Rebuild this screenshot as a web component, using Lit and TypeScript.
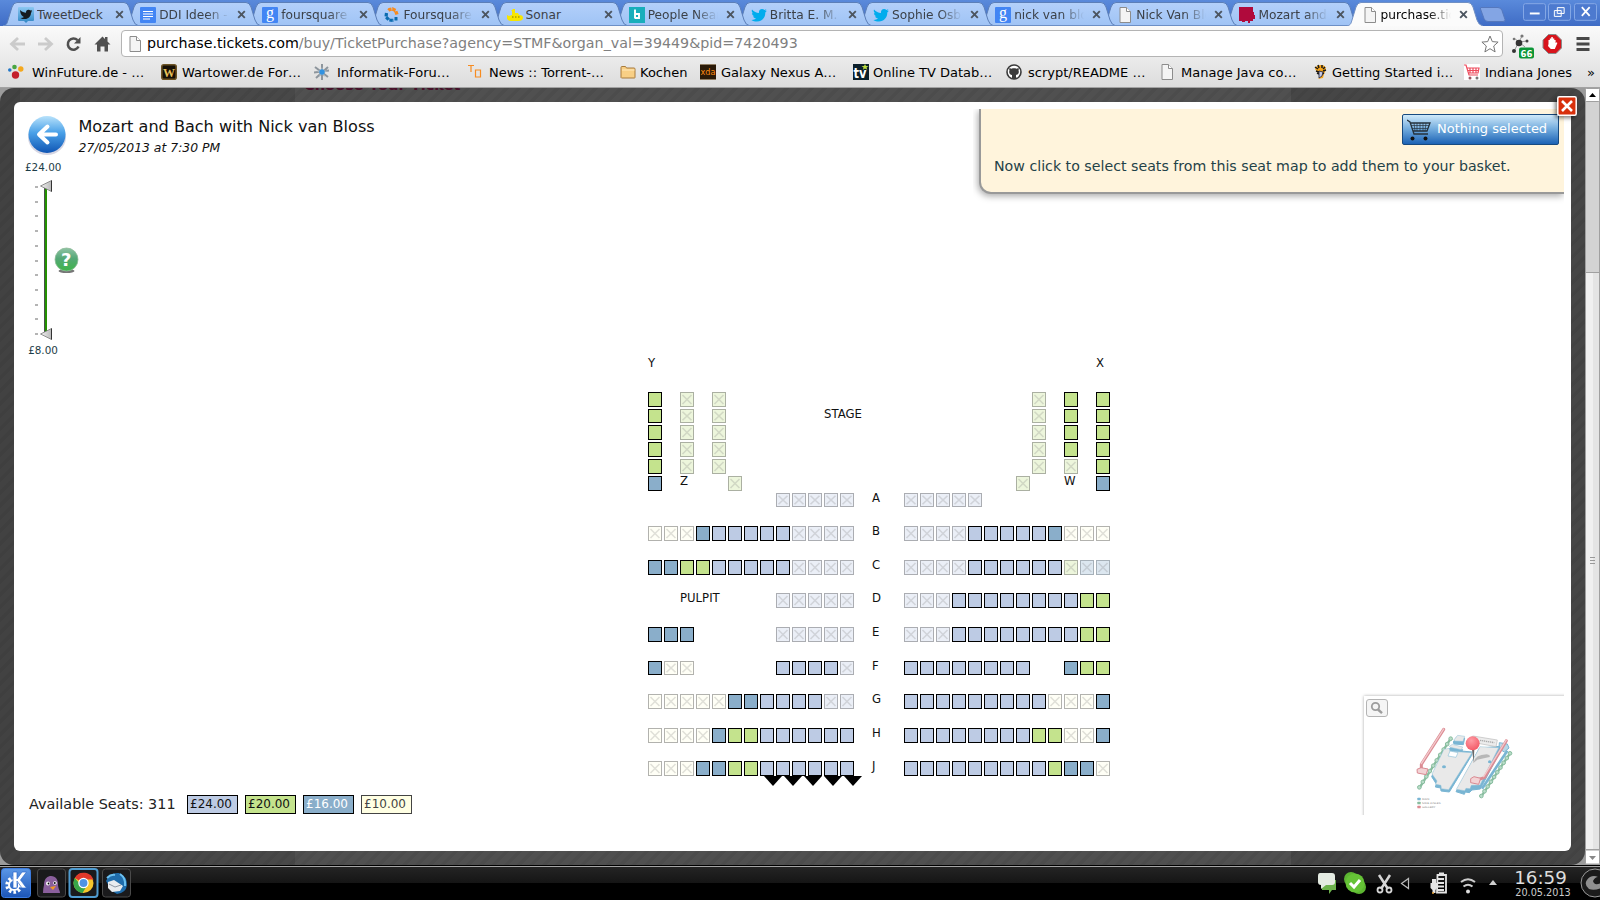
import { LitElement, html, css, svg, nothing } from "lit";
import { customElement, property } from "lit/decorators.js";
import { classMap } from "lit/directives/class-map.js";
import { styleMap } from "lit/directives/style-map.js";

const page = svg`<path d="M3 .5h6.5l4 4v11H3z" fill="#f4f4f4" stroke="#8c8c8c"/><path d="M9.5.5v4h4" fill="#fff" stroke="#8c8c8c"/>`;
const google = svg`<rect width="16" height="16" rx="1" fill="#4285f4"/><text x="8" y="11" text-anchor="middle" font-family="Liberation Serif,serif" font-size="16" fill="#fff">g</text>`;
const bird = svg`<path d="M1 2.500c2 2.300 4.300 3.300 7 3.400C7.600 3.500 9.300 2 11 2c1 0 1.800.4 2.400 1l2-.8-1.200 1.900 1.700-.3-1.600 1.800C14.500 10.600 10.800 14.500 6 14.500c-2.200 0-4-.5-5.600-1.600 1.800.1 3.400-.3 4.700-1.300-1.500-.1-2.600-1-3-2.300h1.400C1.900 8.800.9 7.500.9 6l1.400.4C.8 5.300.4 4 1 2.500z" fill="#00aced"/>`;

const icons: Record<string, unknown> = {
  page,
  google,
  bird,
  deck: svg`<defs><linearGradient id="dk" x2="0" y2="1"><stop stop-color="#8cc8f2"/><stop offset="1" stop-color="#2f86c4"/></linearGradient></defs><path d="M1 0h14q1 0 1 1v12q0 1-1 1h-5l-2 2-2-2H1q-1 0-1-1V1q0-1 1-1z" fill="url(#dk)"/><path d="M2 3c2 2 4 2.600 6 2.700C7.800 3.900 9 2.800 10.500 2.800c.8 0 1.400.3 2 .8l1.600-.5-1 1.400 1.200-.1-1.300 1.400c.1 3.600-2.800 6.300-6 6.300-1.900 0-3.300-.4-4.600-1.200 1.500.1 2.600-.2 3.600-1C4.500 9.500 2.500 8 2 3z" fill="#141a20"/>`,
  docs: svg`<rect width="16" height="16" rx="1" fill="#4285f4"/><path d="M3 4.500h10M3 7h10M3 9.500h10M3 12h7" stroke="#fff" stroke-width="1.200"/>`,
  ring: svg`<path d="M4.500 3.500l1-1 3-.5 3 1.500 1.500 4" fill="none" stroke="#f78b1f" stroke-width="3.400" stroke-dasharray="3.500 .8"/><path d="M2.500 6l-.5 4 3 3 5 .5" fill="none" stroke="#0b6cb0" stroke-width="3.200" stroke-dasharray="3.500 .8"/><path d="M12 10v3.500" stroke="#0b6cb0" stroke-width="3"/>`,
  sub: svg`<path d="M6 2h2v4h3l1 2c3 0 4 1 4 3s-2 3-5 3H5c-3 0-5-1-5-3V8l2 1 3-1V4H4z" fill="#f7e600"/><path d="M5 10h1.500M8 10h1.500M11 10h1.500" stroke="#b09b00" stroke-width="1.400"/>`,
  people: svg`<rect width="16" height="16" fill="#18aebb"/><path d="M6 2.500v9M6 7h4v4H6" fill="none" stroke="#fff" stroke-width="1.900"/>`,
  splat: svg`<path d="M0 0h14v5h1v3h1v4h-2v2h-3v2H9v-2H6v1H3v-1H0z" fill="#b00a3c"/>`,
  win: svg`<circle cx="6.500" cy="3" r="2.300" fill="#49a642"/><circle cx="12.800" cy="5" r="2.700" fill="#f4a81d"/><circle cx="1.800" cy="6" r="1.800" fill="#2277c8"/><circle cx="7.500" cy="11" r="3.700" fill="#c4202c"/>`,
  war: svg`<rect x=".8" y=".8" width="14.400" height="14.400" rx="2" fill="#161006" stroke="#6d5425" stroke-width="1.600"/><text x="8" y="12.500" text-anchor="middle" font-family="Liberation Serif,serif" font-weight="bold" font-size="12" fill="#e6c15a">W</text>`,
  star: svg`<path d="M8 0v16M1 3l13 10M14 3L2 14M0 8.500l15-2" stroke="#8d959c" stroke-width="2"/><path d="M8 3l1.500 3 4 1-3.500 2 .5 4L8 10.500 5 13l1-4-3.500-2L6.500 6z" fill="#a9b6c0"/><circle cx="8" cy="8" r="2.700" fill="#3292e0"/>`,
  torrent: svg`<path d="M1 1.500h6M4 1.500V8M8.500 6h5v7h-5z" fill="none" stroke="#f78b1f" stroke-width="1.200"/>`,
  folder: svg`<path d="M1 13.500V3.500q0-1 1-1h3.500l1 1.500H14q1 0 1 1v8.500q0 .5-.5.5h-13z" fill="#f8cf85" stroke="#a87b3c"/><path d="M2 6h12.500" stroke="#ffe9bb"/>`,
  xda: svg`<rect width="16" height="16" fill="#2a1a08"/><path d="M0 .5h16M0 15.500h16" stroke="#8f7d64"/><text x="8" y="11" text-anchor="middle" textLength="15" lengthAdjust="spacingAndGlyphs" font-family="DejaVu Sans,sans-serif" font-size="9" fill="#ff8a12">xda</text>`,
  tv: svg`<rect width="16" height="16" fill="#0b1f2b"/><text x="7" y="14" text-anchor="middle" textLength="13" lengthAdjust="spacingAndGlyphs" font-family="DejaVu Sans,sans-serif" font-weight="bold" font-size="14" fill="#fff">tv</text><path d="M12 0l1 2h2.500l-2 1.500.8 2.300L12 4.500 9.800 5.800l.8-2.300L8.500 2H11z" fill="#b9dc3f"/>`,
  github: svg`<circle cx="8" cy="8" r="7" fill="#fff" stroke="#3a3a3a" stroke-width="1.600"/><path d="M3.500 4l2 .7c1.500-.5 3.500-.5 5 0l2-.7c.4 1 .3 1.800 0 2.500C13.500 9 12 10.800 10 11v4H6v-4C4 10.800 2.500 9 3.500 6.500 3.200 5.800 3.100 5 3.500 4z" fill="#3a3a3a"/>`,
  tiger: svg`<path d="M3 5q1-4 6-4t5 5l-2 4-1 4-5 1 3-3-3-3z" fill="#f5a51c"/><path d="M3 3l3 2M6 1l1 3M10 1v3M13 3l-2 2M14 6l-3 1M4 7l3 1M5 9l2 1M12 9l-2 1" stroke="#181818" stroke-width="1.500"/><path d="M7 7l4 1-1 4-3 2z" fill="#c4c9e6" stroke="#1c1c30" stroke-width=".8"/>`,
  trolley: svg`<rect width="16" height="16" fill="#fff"/><path d="M0 1h2l3 10h9M3 4h12l-1 5H4.500M6 4v5M9 4v5M12 4v5M3.500 6.500h11" fill="none" stroke="#ee4a5c" stroke-width="1.200"/><circle cx="6" cy="14" r="1.500" fill="#9a5560"/><circle cx="13" cy="14" r="1.500" fill="#777"/>`,
};

const icon = (name: string) => html`<svg class="ico" width="16" height="16" viewBox="0 0 16 16">${icons[name]}</svg>`;

const tabs: [string, string][] = [
  ["deck", "TweetDeck"], ["docs", "DDI Ideen -"], ["google", "foursquare"], ["ring", "Foursquare"],
  ["sub", "Sonar"], ["people", "People Near"], ["bird", "Britta E. M."], ["bird", "Sophie Osb"],
  ["google", "nick van blo"], ["page", "Nick Van Blo"], ["splat", "Mozart and"], ["page", "purchase.tic"],
];

const bookmarks: [string, string, number, number][] = [
  ["win", "WinFuture.de - …", 153, 8], ["war", "Wartower.de For…", 153, 5], ["star", "Informatik-Foru…", 153, 7],
  ["torrent", "News :: Torrent-…", 153, 6], ["folder", "Kochen", 80, 4], ["xda", "Galaxy Nexus A…", 153, 5],
  ["tv", "Online TV Datab…", 153, 4], ["github", "scrypt/README …", 153, 6], ["page", "Manage Java co…", 153, 6],
  ["tiger", "Getting Started i…", 152, 4], ["trolley", "Indiana Jones", 123, 5],
];

@customElement("browser-chrome")
export class BrowserChrome extends LitElement {
  static styles = css`
    :host { display: block; height: 88px; font-family: "DejaVu Sans", sans-serif; color: #000; }
    svg { display: block; flex: none; }
    .strip { height: 26px; background: linear-gradient(#5a8adb, #3f6cc5); display: flex; padding-left: 3px; box-sizing: border-box; }
    .tab { position: relative; width: 122.15px; flex: none; display: flex; align-items: center; padding: 3px 0 0 15px; box-sizing: border-box; font-size: 12.2px; color: #3c4148; }
    .shape { position: absolute; left: 0; top: 2px; }
    .tab .ico, .title, .x { position: relative; }
    .title { width: 70px; margin-left: 3px; white-space: nowrap; overflow: hidden; line-height: 20px; -webkit-mask-image: linear-gradient(90deg, #000 68%, transparent); mask-image: linear-gradient(90deg, #000 68%, transparent); }
    .x { margin-left: 8px; }
    .first .title { -webkit-mask-image: none; mask-image: none; }
    .active { color: #000; }
    .plus { margin: 7px 0 0 10px; position: relative; }
    .wins { margin-left: auto; display: flex; gap: 2px; padding: 2.500px 3px 0 0; }
    .bars { height: 62px; background: linear-gradient(#fafafa, #ececec 30px, #dcdcdc); border-bottom: 1px solid #a2a2a2; box-sizing: border-box; }
    .nav { display: flex; align-items: center; height: 35px; box-sizing: border-box; }
    .url { box-sizing: border-box; width: 1382px; height: 27px; border: 1px solid #b4b4b4; border-radius: 4px; background: #fff; display: flex; align-items: center; padding: 0 3px 0 5px; font-size: 14.25px; color: #808080; white-space: pre; }
    .url b { font-weight: normal; color: #000; }
    .url span { flex: 1; margin: -2px 0 0 4px; }
    .ext { margin-left: 8px; }
    .marks { display: flex; align-items: center; height: 22px; padding-left: 8px; font-size: 13px; white-space: nowrap; }
    .mark { display: flex; align-items: center; flex: none; }
  `;

  render() {
    return html`
      <div class="strip">
        ${tabs.map(([ic, label], i) => {
          const active = i === tabs.length - 1;
          return html`<div class=${classMap({ tab: true, active, first: i === 0 || i === 4 })} style=${styleMap({ zIndex: String(active ? 30 : 20 - i) })}>
            <svg class="shape" width="138" height="24" viewBox="0 0 138 24">
              <defs><linearGradient id="tg" x2="0" y2="1"><stop stop-color="#b3d0fa"/><stop offset="1" stop-color="#9fc3f5"/></linearGradient></defs>
              <path d="M0 24C4 23 4 21 5 18L9 5Q10.500.5 14 .5H121Q124.500.5 126 5L130 18Q131.500 23 136 24" fill=${active ? "#fbfbfb" : "url(#tg)"} stroke=${active ? "#6f8fc4" : "#5c7fb8"}/>
              ${active ? nothing : svg`<path d="M0 23.500H136" stroke="#6c8fc6"/>`}
            </svg>
            ${icon(ic)}<span class="title">${label}</span>
            <svg class="x" width="9" height="9" viewBox="0 0 9 9"><path d="M1.200 1.200l6.600 6.600M7.800 1.200L1.200 7.800" stroke="#4c5560" stroke-width="1.900"/></svg>
          </div>`;
        })}
        <svg class="plus" width="28" height="15" viewBox="0 0 28 15"><path d="M2 .5h17q3 0 4 3l3 9q.5 2-2 2H9q-3 0-4-3L1.500 2Q1 .5 2 .5z" fill="#83a5e4" stroke="#5578bd"/></svg>
        <div class="wins">
          ${[svg`<path d="M7 10.500h10" stroke="#fff" stroke-width="2"/>`,
             svg`<path d="M9.500 4.500h7v6h-7zM6.500 7.500h7v6h-7z" fill="#5b86d6" stroke="#fff"/>`,
             svg`<path d="M8 4l8 9M16 4l-8 9" stroke="#fff" stroke-width="1.800"/>`].map(
            (g) => html`<svg width="23.500" height="18" viewBox="0 0 24 18"><rect x=".5" y=".5" width="22.500" height="17" rx="2" fill="#4d7acf" stroke="#86a9e6"/>${g}</svg>`)}
        </div>
      </div>
      <div class="bars">
        <div class="nav">
          <svg width="121" height="30" viewBox="0 0 121 30">
            <path d="M25 15H12M18 9l-6.500 6 6.500 6" fill="none" stroke="#cbcbcb" stroke-width="2.800"/>
            <path d="M38 15h13M45 9l6.500 6-6.500 6" fill="none" stroke="#cbcbcb" stroke-width="2.800"/>
            <path d="M77.500 11.200A5.600 5.600 0 1 0 78.500 17.500" fill="none" stroke="#505050" stroke-width="2.600"/><path d="M80.500 8v6.500h-6.500z" fill="#505050"/>
            <path d="M94.500 15.500l8-8 2.500 2.500V8h2.500v4.500l3 3h-2.500v7h-3.500v-5h-4v5H97v-7z" fill="#505050"/>
          </svg>
          <div class="url">
            ${icon("page")}<span><b>purchase.tickets.com</b>/buy/TicketPurchase?agency=STMF&amp;organ_val=39449&amp;pid=7420493</span>
            <svg width="18" height="18" viewBox="0 0 18 18"><path d="M9 1l2.300 5.600 5.800.5-4.400 3.900 1.400 5.900L9 13.700 3.900 16.900 5.300 11 .9 7.100l5.800-.5z" fill="#fff" stroke="#777"/></svg>
          </div>
          <svg class="ext" width="86" height="30" viewBox="0 0 86 30">
            <path d="M8 13L3 22M8 13L3 9M8 13l3-6M8 13l8-1M8 13l6 5" stroke="#999" stroke-width="1"/>
            <circle cx="8" cy="14" r="3.300" fill="#333"/><circle cx="3" cy="22" r="2" fill="#333"/><circle cx="3" cy="10" r="1.300" fill="#777"/><circle cx="11" cy="7" r="1.600" fill="#777"/><circle cx="16" cy="12" r="1.500" fill="#444"/>
            <rect x="8" y="18.500" width="15" height="11" rx="2" fill="#0c9637"/><text x="15.500" y="27.500" text-anchor="middle" font-family="DejaVu Sans,sans-serif" font-weight="bold" font-size="8.500" fill="#fff">66</text>
            <path d="M37.500 5.500h7.500l5.500 5.500v8l-5.500 5.500h-7.500L32 19v-8z" fill="#d8141c" stroke="#8a8a8a"/><path d="M37.500 15V11h1.300V9.500h1.500V8h1.500v1.500h1.500V11h1.300v3l1-.8.8.8-2.600 6h-4L37 17z" fill="#fff"/>
            <path d="M65.500 9.500h13M65.500 15h13M65.500 20.500h13" stroke="#484848" stroke-width="3"/>
          </svg>
        </div>
        <div class="marks">
          ${bookmarks.map(([ic, label, w, gap]) => html`<div class="mark" style=${styleMap({ width: `${w}px`, gap: `${gap}px` })}>${icon(ic)}<span>${label}</span></div>`)}
          <span>»</span>
        </div>
      </div>`;
  }
}

/* Lower case: free seat, upper case: taken. l £24, g £20, b £16, y £10 */
const side = "g.G.G...................G.g.g";
const seatRows: string[] = [
  side, side, side, side,
  "g.G.G...................G.G.g",
  "b....G.................G....b",
  "........LLLLL...LLLLL........",
  "",
  "YYYblllllLLLL...LLLLlllllbYYY",
  "",
  "bbgglllllLLLL...LLLLllllllGBB",
  "",
  "........LLLLL...LLLllllllllgg",
  "",
  "bbb.....LLLLL...LLLllllllllgg",
  "",
  "bYY.....llllL...llllllll..bgg",
  "",
  "YYYYYbbllllLL...lllllllllYYYb",
  "",
  "YYYYbggllllll...llllllllggYYb",
  "",
  "YYYbbggllllll...lllllllllgbbY",
];
const rowTracks = [17, 16, 17, 17, 17, 17, 17, 16, 17, 17, 17, 16, 17, 17, 17, 17, 17, 16, 17, 17, 17, 16, 17];
const shortRows = [1, 6, 16];
/* text, column, row (row 0 is the heading track) */
const mapLabels: [string, number, number][] = [
  ["Y", 0, 0], ["X", 28, 0], ["STAGE", 11, 2], ["Z", 2, 6], ["W", 26, 6], ["PULPIT", 2, 13],
  ["A", 13, 7], ["B", 13, 9], ["C", 13, 11], ["D", 13, 13], ["E", 13, 15], ["F", 13, 17], ["G", 13, 19], ["H", 13, 21], ["J", 13, 23],
];

@customElement("seat-map")
export class SeatMap extends LitElement {
  static styles = css`
    :host { display: block; width: 464px; font: 11.7px "DejaVu Sans", sans-serif; color: #111; }
    .grid { display: grid; grid-template-columns: repeat(29, 16px); }
    .seat { width: 14px; height: 15px; box-sizing: border-box; border: 1px solid #000; }
    .short { height: 14px; }
    .l { background: #bdcbe4; } .g { background: #c4e38d; } .b { background: #8aaeca; } .y { background: #ffffe3; }
    .taken svg { display: block; width: 12px; height: 100%; }
    .taken.l { background: #ebeff7; border-color: #abadb2; } .taken.g { background: #edf6dc; border-color: #abb0a2; } .taken.b { background: #dce7f0; border-color: #a6b0b8; } .taken.y { background: #fffff6; border-color: #b2b2ae; }
    .label { white-space: nowrap; line-height: 13px; height: 13px; margin-top: -1px; width: 0; }
    .row-label { padding-left: 16px; }
    .arrows { display: flex; gap: 2px; padding-left: 116px; margin-top: -2px; position: relative; }
  `;

  render() {
    const seats = seatRows.flatMap((row, r) => [...row].map((c, i) => {
      if (c === ".") return nothing;
      const kind = c.toLowerCase();
      const taken = c !== kind;
      return html`<div class=${classMap({ seat: true, taken, [kind]: true, short: shortRows.includes(r) })} style=${styleMap({ gridArea: `${r + 2} / ${i + 1}` })}>
        ${taken ? html`<svg viewBox="0 0 12 13" preserveAspectRatio="none"><path d="M1.500 2l9 9M10.500 2l-9 9" stroke="#707070" stroke-opacity=".22" stroke-width="1.600"/></svg>` : nothing}</div>`;
    }));
    return html`
      <div class="grid" style=${styleMap({ gridTemplateRows: `34px ${rowTracks.map((t) => `${t}px`).join(" ")}` })}>
        ${seats}
        ${mapLabels.map(([t, c, r]) => html`<div class=${classMap({ label: true, "row-label": c === 13 })} style=${styleMap({ gridArea: `${r + 1} / ${c + 1}` })}>${t}</div>`)}
      </div>
      <div class="arrows">${[0, 1, 2, 3, 4].map(() => html`<svg width="18" height="10" viewBox="0 0 18 10"><path d="M0 0h18L9 10z"/></svg>`)}</div>`;
  }
}

@customElement("mini-map")
export class MiniMap extends LitElement {
  static styles = css`
    :host { display: block; box-sizing: border-box; width: 203px; height: 122px; padding: 3px 0 0 3px; overflow: hidden; }
    .box { width: 210px; height: 130px; box-shadow: 0 0 3px #a8a8a8; background: #fff; }
    .zoom { display: block; padding: 3px 0 0 2px; }
    .plan { display: block; margin: -7px 0 0 36px; }
  `;

  render() {
    const beads = (x1: number, y1: number, x2: number, y2: number) =>
      Array.from({ length: 10 }, (_, i) => svg`<circle cx=${x1 + ((x2 - x1) * i) / 9} cy=${y1 + ((y2 - y1) * i) / 9} r="5.500" fill="#b9dcc8" stroke="#88bd9f" stroke-width="3"/>`);
    return html`<div class="box">
      <svg class="zoom" width="22" height="18" viewBox="0 0 22 18"><rect x=".5" y=".5" width="21" height="17" rx="2.500" fill="#f5f5f5" stroke="#b4b4b4"/><circle cx="9.500" cy="7.500" r="3.700" fill="none" stroke="#9d9d9d" stroke-width="1.800"/><path d="M12 10.500l4 3.700" stroke="#9d9d9d" stroke-width="2.400"/></svg>
      <svg class="plan" width="130" height="110" viewBox="0 0 390 330">
        <g stroke-linejoin="round">
          <path d="M58 234L152 86M244 259L330 130" stroke="#88bd9f" stroke-width="7"/>
          ${beads(58, 232, 152, 86)}${beads(244, 258, 330, 130)}
          <path d="M246 236L322 122" stroke="#79b5d3" stroke-width="8"/>
          <path d="M298 98l24 4 5 12-14 12-16-10z" fill="#b9d7e5" stroke="#79b5d3" stroke-width="3"/>
          <g stroke="#79b5d3" stroke-width="3" fill="#79b5d3">
            <path d="M95 200L131 123l20-3 65 6-1 10-67 110-25-3-1-9-16-3 3-9z"/><path d="M168 245l70-130 60-6 3 14-60 114-25 3-8 8-12-2-3 7z"/>
            <path d="M160 96l10-15 24 3-4 20-28-2zM146 118l8-7 34 8-4 8-36-7z"/>
          </g>
          <g stroke="#93c2d9" stroke-width="1.500" fill="#e9e9e9">
            <path d="M96 192L132 118l16-3 2 9 66 4-70 111-22-3-1-10-16-3 4-10z"/><path d="M169 238l71-128 56 3-56 112-26 1-4 10-12-1-4 7z"/>
            <path d="M162 89l11-13 21 3-5 15-25-1zM148 109l9-6 31 8-4 8-34-7z"/>
          </g>
          <path d="M150 123l24 5-6 14-24-4z" fill="#fff" stroke="#93c2d9" stroke-width="2"/><ellipse cx="132" cy="170" rx="6" ry="4.500" fill="#79b5d3"/><ellipse cx="269" cy="155" rx="5" ry="4.500" fill="#79b5d3"/>
          <path d="M209 84l10-6 73 12-4 20-70-13z" fill="#ececec" stroke="#b9b9b9" stroke-width="2"/><path d="M240 91l43 7" stroke="#aaa" stroke-width="4" stroke-dasharray="4 2"/>
          <g fill="none" stroke-linecap="round"><path d="M131 58L64 163v18M319 92L253 203l-26 8" stroke="#dc8c94" stroke-width="9"/><path d="M131 57L64 161M319 90L251 200" stroke="#f3c9cc" stroke-width="4"/></g>
          <path d="M51 178l12-5 21 4-6 17-26-5zM212 206l10-6 20 5-6 18-24-5z" fill="#f3d3d5" stroke="#d98991" stroke-width="3"/>
          <path d="M220 159q5-25 40-26 12 2 9 8-16 4-37 8z" fill="#9c9c9c" opacity=".65"/>
          <path d="M216 118h7l-2 41z" fill="#686868"/>
        </g>
        <defs><radialGradient id="pin" cx=".4" cy=".3" r=".7"><stop stop-color="#ff9ca4"/><stop offset="1" stop-color="#f35c69"/></radialGradient></defs>
        <circle cx="218" cy="100" r="21" fill="url(#pin)"/>
        ${[["#79b5d3", "MAIN", 268, 22], ["#88bd9f", "SIDE AISLES", 280, 56], ["#dc8c94", "GALLERY", 292, 40]].map(
          ([c, t, y, w]) => svg`<rect x="52" y=${Number(y) - 5} width="10" height="8" rx="2" fill=${c}/><text x="66" y=${Number(y) + 3} font-family="DejaVu Sans,sans-serif" font-size="7.500" textLength=${w} lengthAdjust="spacingAndGlyphs" fill="#8a8a8a">${t}</text>`)}
      </svg></div>`;
  }
}

@customElement("price-slider")
export class PriceSlider extends LitElement {
  static styles = css`
    :host { display: block; width: 66px; font: 10.4px/14px "DejaVu Sans", sans-serif; color: #1d3d48; }
    .top, .bottom { width: 34px; text-align: center; white-space: nowrap; }
    .top { margin-left: -1px; }
    svg { display: block; }
    .bottom { margin-top: 1px; }
  `;
  render() {
    return html`<div class="top">£24.00</div>
      <svg width="66" height="168" viewBox="26 174 66 168">
        <defs>
          <linearGradient id="hg" x2="0" y2="1"><stop stop-color="#8fc3a4"/><stop offset=".45" stop-color="#55a877"/><stop offset="1" stop-color="#3fb549"/></linearGradient>
          <linearGradient id="kn"><stop stop-color="#f2f2f2"/><stop offset="1" stop-color="#b9b9b9"/></linearGradient>
        </defs>
        ${Array.from({ length: 11 }, (_, i) => svg`<rect x="35" y=${186 + Math.round(i * 14.700)} width="3" height="2" fill="#b4b4b4"/>`)}
        <rect x="44" y="188" width="3" height="144" fill="#249200"/><rect x="44" y="188" width="1" height="144" fill="#47504a"/>
        ${[186, 334].map((y) => svg`<path d="M40.500 ${y}L51.500 ${y - 5.500}V${y + 5.500}z" fill="url(#kn)" stroke="#777" stroke-width=".8"/><path d="M51.500 ${y - 5.500}V${y + 5.500}" stroke="#333"/>`)}
        <ellipse cx="66.500" cy="271" rx="8" ry="2" fill="#777"/><circle cx="66.500" cy="259.500" r="11.500" fill="url(#hg)" stroke="#90bd9b" stroke-width=".8"/>
        <text x="66.300" y="266" text-anchor="middle" font-family="DejaVu Sans,sans-serif" font-weight="bold" font-size="18" fill="#fff">?</text>
      </svg>
      <div class="bottom">£8.00</div>`;
  }
}

@customElement("task-bar")
export class TaskBar extends LitElement {
  static styles = css`
    :host { display: flex; align-items: center; height: 35px; box-sizing: border-box; border-top: 1px solid #000; background: linear-gradient(#a4a4a4 1px, #242424 1px, #151515 17px, #000 17px); color: #ccc; font-family: "DejaVu Sans", sans-serif; }
    svg { display: block; flex: none; }
    .tray { margin-left: auto; }
    .clock { width: 66px; text-align: center; line-height: 12px; font-size: 9.700px; padding-top: 2px; }
    .time { font-size: 18.300px; line-height: 18px; color: #ddd; margin-left: -5px; }
  `;
  render() {
    const frame = (x: number, hot: boolean) => svg`<rect x=${x + 0.5} y="3" width="28" height="28" rx="3" fill="#1a1a1c" stroke=${hot ? "#4f9bd0" : "#4a4a4a"} stroke-width=${hot ? 2 : 1}/>`;
    return html`
      <svg width="134" height="34" viewBox="0 0 134 34">
        <defs><linearGradient id="kg" x2="0" y2="1"><stop stop-color="#5b97e6"/><stop offset="1" stop-color="#1c55b8"/></linearGradient></defs>
        <rect x="1.500" y="2.500" width="29" height="29" rx="3" fill="url(#kg)" stroke="#3b7be0"/>
        <circle cx="14" cy="19" r="7" fill="none" stroke="#fff" stroke-width="3.500" stroke-dasharray="2.500 2"/><circle cx="14" cy="19" r="5" fill="none" stroke="#fff" stroke-width="2"/>
        <path d="M13 6h4v7l5-7h4.500l-6 8 6 8H22l-5-7v7h-4z" fill="#fff" stroke="#2b69cc" stroke-width=".7"/>
        ${frame(37, false)}${frame(69, true)}${frame(102, false)}
        <path d="M43 27q0-4 1-8c0-7 4-9 7-9 5 0 7 4 7 8 0 5 2 6 2 9z" fill="#8a5f9c"/><circle cx="48" cy="17.500" r="2" fill="#fff"/><circle cx="55" cy="17" r="1.800" fill="#fff"/><circle cx="48.500" cy="17.500" r=".9"/><circle cx="54.800" cy="17" r=".9"/><path d="M50 21l6-1-3 4z" fill="#f39a25"/>
        <circle cx="83.500" cy="17" r="10" fill="#f6c62d"/><path d="M83.500 17L74.800 12A10 10 0 0 1 93.500 15V13.500H83.500z" fill="#e0392b"/><path d="M74.800 12A10 10 0 0 0 82.500 27L87 19.500 80 18z" fill="#37a648"/><circle cx="83.500" cy="17" r="4.600" fill="#4d93e4" stroke="#fff" stroke-width="1.300"/>
        <path d="M106 15q4-9 13-8 8 3 8 12-1 8-10 9l-5-3z" fill="#1f6cab"/><path d="M107 12q4-4 8-3M120 8q6 4 5 12" stroke="#6bc0f0" stroke-width="2" fill="none"/><path d="M108 16l6-2 9 6-3 5-8 1-4-4z" fill="#e8ecef"/><path d="M109 18l6 3 6-2" fill="none" stroke="#8c97a3"/>
      </svg>
      <svg class="tray" width="196" height="34" viewBox="1314 0 196 34">
        <path d="M1322 14h14v10h-4l-3 4v-4h-7z" fill="#6db34c"/><path d="M1320 7h12q3 0 3 3v6q0 3-3 3h-6l-5 4v-4q-3 0-3-3v-6q0-3 2-3z" fill="#e4ebe2"/>
        <circle cx="1351" cy="13" r="7" fill="#5cb531"/><circle cx="1359" cy="21" r="7" fill="#5cb531"/><circle cx="1355" cy="17" r="9.500" fill="#65c336"/><path d="M1350 17l4 4 6-7" fill="none" stroke="#fff" stroke-width="3"/>
        <path d="M1379 9l9 14M1390 9l-9 14" stroke="#d5d5d5" stroke-width="2.500"/><circle cx="1380" cy="24" r="2.500" fill="none" stroke="#d5d5d5" stroke-width="1.800"/><circle cx="1389" cy="24" r="2.500" fill="none" stroke="#d5d5d5" stroke-width="1.800"/>
        <path d="M1401.500 17.500l7-5v10z" fill="none" stroke="#bbb" stroke-width="1.200"/>
        <path d="M1437.500 9h8.500v17.500h-9z" fill="none" stroke="#e5e5e5" stroke-width="1.800"/><path d="M1439 7.500h5" stroke="#e5e5e5" stroke-width="2"/><path d="M1437 13h7M1437 17h7M1437 20.500h7M1437 24h7" stroke="#e5e5e5" stroke-width="2"/><path d="M1432 13v4h-1.500v5l2 2v3h3v-3l1.500-2v-5H1436v-4" fill="#e5e5e5"/><circle cx="1433" cy="27" r="1" fill="#e8a53c"/>
        <circle cx="1468" cy="25.500" r="2" fill="#ddd"/><path d="M1463.500 20.500q4.500-3.500 9 0M1461 16q7-5.500 14 0" fill="none" stroke="#ccc" stroke-width="2"/>
        <path d="M1489 19l4-5 4 5z" fill="#d0d0d0"/>
      </svg>
      <div class="clock"><div class="time">16:59</div>20.05.2013</div>
      <svg width="24" height="34" viewBox="1576 0 24 34"><circle cx="1595" cy="17" r="14" fill="#1b1b1b" stroke="#999"/><path d="M1590 11q-8 6-1 12 5 2 12-1v-5q-7 3-8-2 2-4 5-4-4-2-8 0z" fill="#909090"/></svg>`;
  }
}

@customElement("app-root")
export class AppRoot extends LitElement {
  @property({ type: Number }) available = 311;

  static styles = css`
    :host { display: flex; flex-direction: column; width: 1600px; height: 900px; overflow: hidden; background: #fff; font-family: "DejaVu Sans", sans-serif; }
    svg { display: block; flex: none; }
    browser-chrome { position: relative; z-index: 2; }
    .view { display: flex; height: 777px; background: #9b9b9b; }
    .shade { position: relative; width: 1585px; height: 777px; box-sizing: border-box; padding: 14px; border-radius: 14px; overflow: hidden;
      background: repeating-linear-gradient(135deg, transparent 0 5px, rgba(0,0,0,.05) 6px 9px), linear-gradient(90deg, #424242 20px, #484848 20px 295px, #505050 295px 1291px, #464646 1291px); }
    .behind { position: absolute; left: 304px; top: -12px; font-weight: bold; font-size: 14.600px; line-height: 18px; color: #48102a; }
    .modal { position: relative; width: 1557px; height: 749px; box-sizing: border-box; background: #fff; border-radius: 6px; padding: 7px 7px 0 10px; display: flex; flex-direction: column; }
    .close { position: absolute; left: 1557px; top: 8px; box-shadow: -2px 2px 4px rgba(0,0,0,.5); }
    .head { display: flex; height: 100px; }
    .back { margin: 5px 0 0 3px; }
    .what { flex: 1; padding: 8px 0 0 11.5px; color: #111; }
    h1 { margin: 0; font-weight: normal; font-size: 16.080px; line-height: 20px; }
    .when { font-style: italic; font-size: 12.400px; line-height: 18px; margin-top: 2px; }
    .clip { overflow: hidden; padding-left: 6px; height: 100px; }
    .basket { box-sizing: border-box; width: 585px; height: 85px; background: #fff4dc; border: 2px solid #999; border-width: 0 0 2px 2px; border-radius: 0 0 0 12px; box-shadow: -1px 2px 7px rgba(0,0,0,.35); display: flex; flex-direction: column; padding: 5px 5px 0 13px; color: #1f4248; font-size: 14.200px; }
    .cart { align-self: flex-end; box-sizing: border-box; width: 157px; height: 31px; border: 1px solid #174a80; border-radius: 2px; background: linear-gradient(#cfe9fa, #6fa9dc 50%, #1c62b5); color: #fff; display: flex; align-items: center; gap: 5px; padding-left: 4px; font-size: 13px; white-space: nowrap; }
    .cart span { margin-top: -2px; }
    .hint { margin-top: 11px; line-height: 20px; white-space: nowrap; }
    .body { display: flex; height: 627px; }
    price-slider { margin: -49px 0 0 2px; }
    seat-map { margin: 149px 0 0 556px; }
    mini-map { margin: 484px 0 0 auto; }
    .legend { display: flex; align-items: center; margin-top: -41px; padding-left: 5px; height: 19px; font-size: 14.400px; color: #222; white-space: nowrap; }
    .legend .count { width: 158px; margin-top: -2px; }
    .price { box-sizing: border-box; width: 51px; height: 19px; line-height: 17px; border: 1px solid #000; padding-left: 2px; font-size: 12px; margin-right: 7px; color: #111; }
    .l { background: #bdcbe4; } .g { background: #c4e38d; } .b { background: #8aaeca; color: #fff; } .y { background: #ffffe3; border-color: #444; color: #444; }
    .scroll { width: 15px; display: flex; flex-direction: column; }
    .scroll .track { height: 170px; box-sizing: border-box; background: #d3d3d3; border: 1px solid #a0a0a0; border-width: 0 1px; }
    .scroll .thumb { flex: 1; box-sizing: border-box; border: 1px solid #a0a0a0; background: linear-gradient(90deg, #f0f0f0 7px, #e4e4e4 7px); display: flex; justify-content: center; align-items: center; }
  `;

  render() {
    return html`
      <browser-chrome></browser-chrome>
      <div class="view">
        <div class="shade">
          <div class="behind">Choose Your Ticket</div>
          <div class="modal">
            <div class="head">
              <svg class="back" width="40" height="42" viewBox="0 0 40 42">
                <defs><linearGradient id="bg" x2="0" y2="1"><stop stop-color="#b8e2fb"/><stop offset=".45" stop-color="#4aa1e8"/><stop offset="1" stop-color="#0f55b4"/></linearGradient></defs>
                <ellipse cx="20" cy="23" rx="19" ry="18" fill="#9999b8" opacity=".4"/><circle cx="20" cy="20.500" r="18.500" fill="url(#bg)"/>
                <path d="M29 20.500H13M20.500 12.500l-8.500 8 8.500 8" fill="none" stroke="#fff" stroke-width="4" stroke-linecap="round" stroke-linejoin="round"/>
              </svg>
              <div class="what"><h1>Mozart and Bach with Nick van Bloss</h1><div class="when">27/05/2013 at 7:30 PM</div></div>
              <div class="clip"><div class="basket">
                <div class="cart">
                  <svg width="25" height="22" viewBox="0 0 25 22"><path d="M0 1l3 2 4 12h14M3 4h20l-3 8H6" fill="none" stroke="#26323c" stroke-width="1.300"/><path d="M7 4l1 8M10 4v8M13 4v8M16 4v8M19 4l-1 8M4 6.500h18M5 9.500h16" stroke="#26323c" stroke-width=".7"/><circle cx="5.500" cy="19.500" r="2" fill="#111"/><circle cx="18.500" cy="19.500" r="2" fill="#111"/></svg>
                  <span>Nothing selected</span>
                </div>
                <div class="hint">Now click to select seats from this seat map to add them to your basket.</div>
              </div></div>
            </div>
            <div class="body">
              <price-slider></price-slider>
              <seat-map></seat-map>
              <mini-map></mini-map>
            </div>
            <div class="legend">
              <span class="count">Available Seats: ${this.available}</span>
              ${[["l", "£24.00"], ["g", "£20.00"], ["b", "£16.00"], ["y", "£10.00"]].map(([k, t]) => html`<div class=${classMap({ price: true, [k]: true })}>${t}</div>`)}
            </div>
          </div>
          <svg class="close" width="20" height="20" viewBox="0 0 20 20"><rect x=".8" y=".8" width="18.400" height="18.400" rx="1.500" fill="#d8300c" stroke="#fff" stroke-width="1.500"/><path d="M5 5l10 10M15 5L5 15" stroke="#fff" stroke-width="2.600"/></svg>
        </div>
        <div class="scroll">
          <svg width="15" height="14" viewBox="0 0 15 14"><rect x=".5" y=".5" width="14" height="13" rx="1" fill="#fff" stroke="#a0a0a0"/><path d="M4 9l3.500-4L11 9z"/></svg>
          <div class="track"></div>
          <div class="thumb"><svg width="5" height="8" viewBox="0 0 5 8"><path d="M0 .5h5M0 3.500h5M0 6.500h5" stroke="#999"/></svg></div>
          <svg width="15" height="15" viewBox="0 0 15 15"><rect x=".5" y="0" width="14" height="14" rx="1" fill="#fff" stroke="#a0a0a0"/><path d="M4 6l3.500 4L11 6z" fill="#888"/></svg>
        </div>
      </div>
      <task-bar></task-bar>`;
  }
}
